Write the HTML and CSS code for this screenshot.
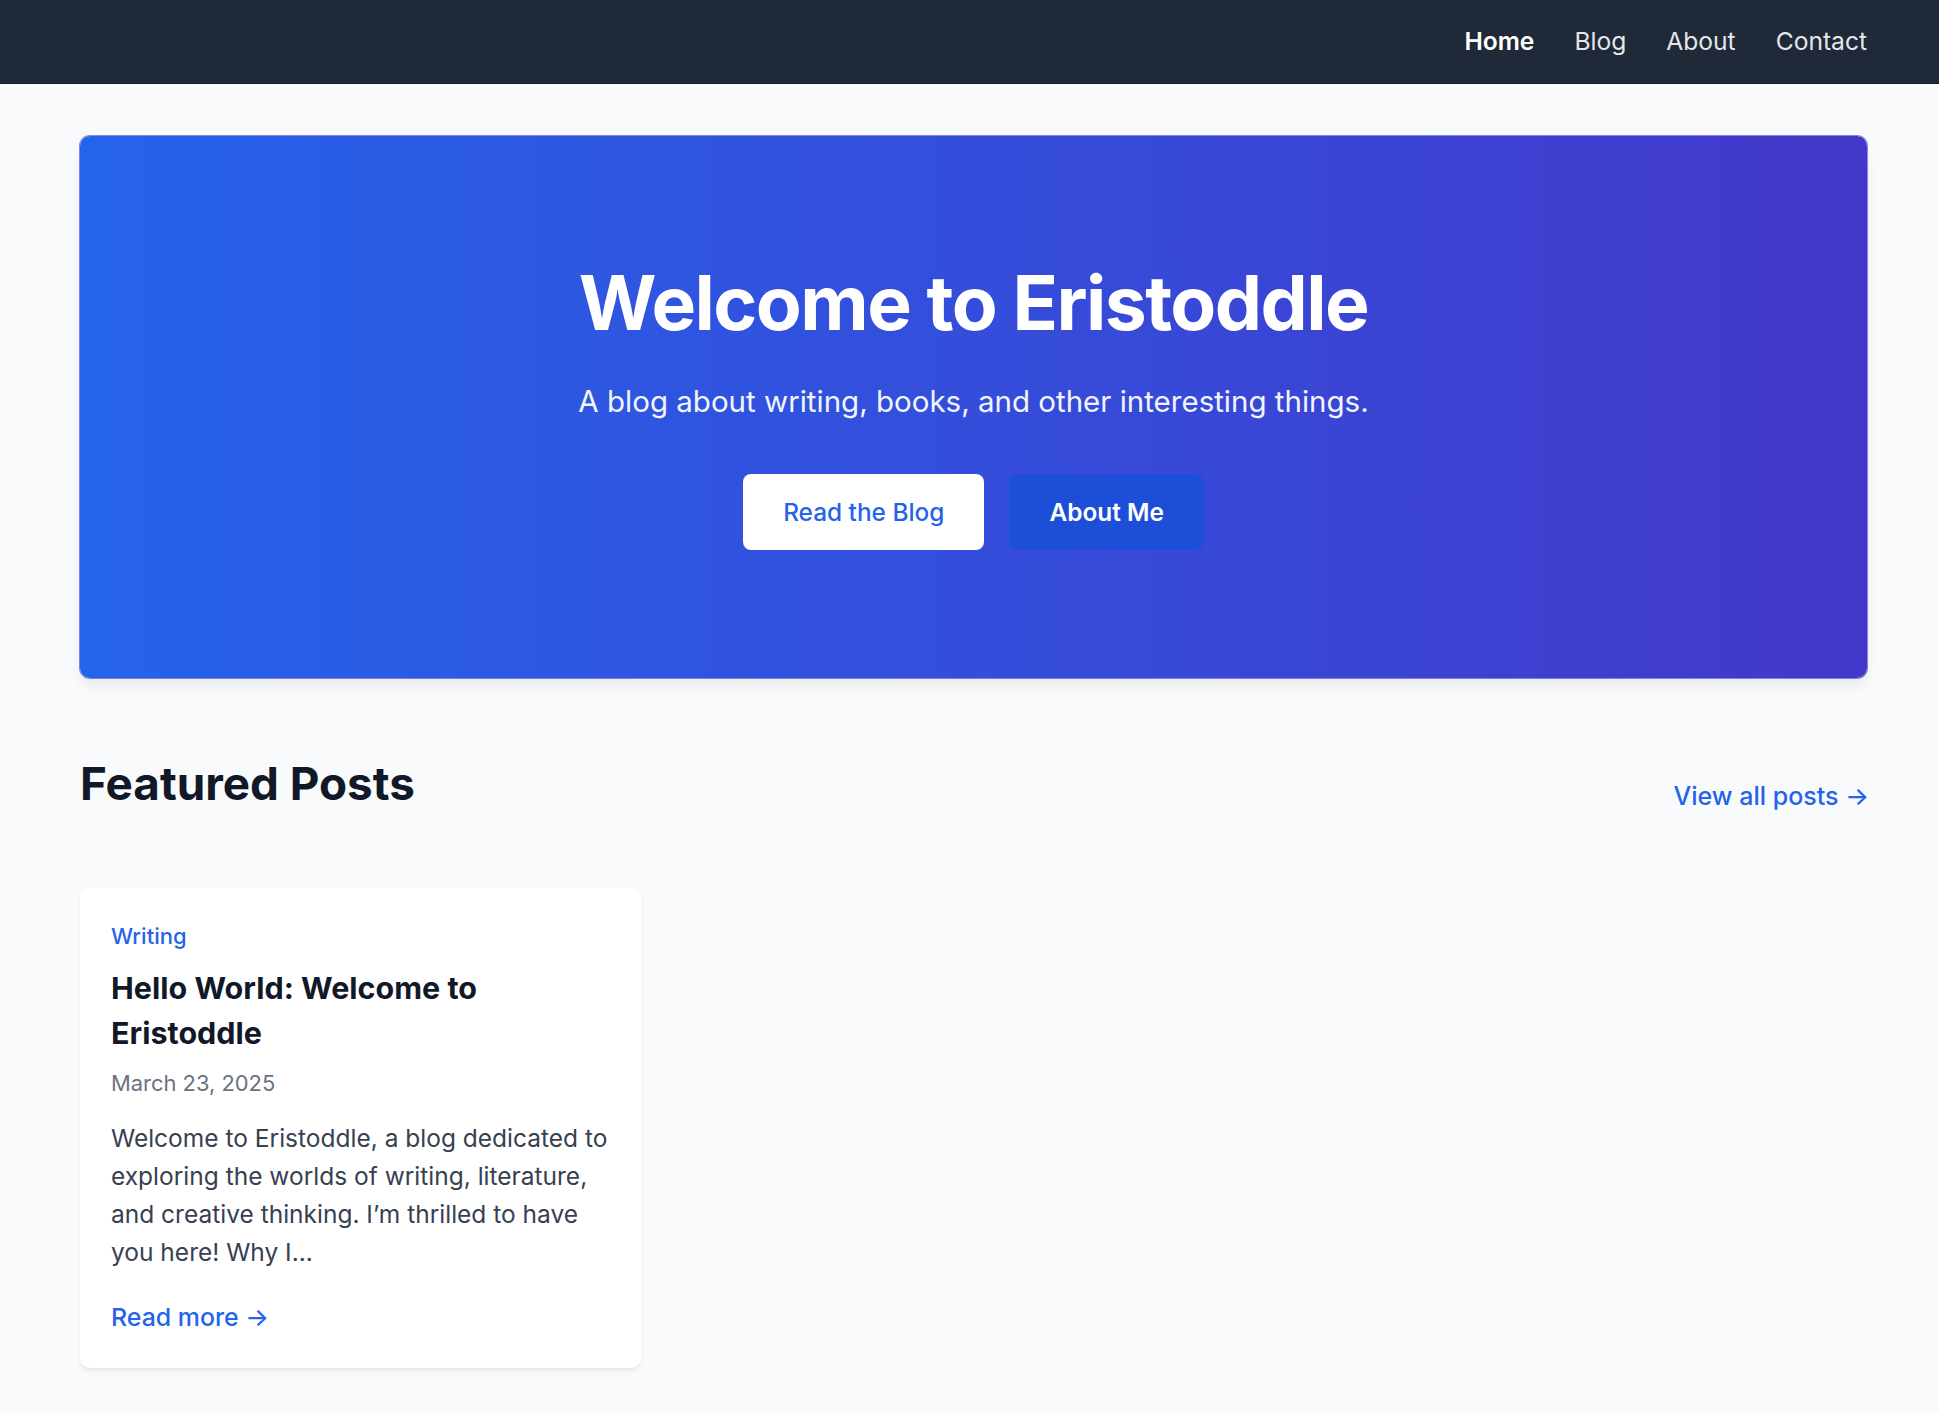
FILE: index.html
```html
<!DOCTYPE html>
<html lang="en">
<head>
<meta charset="utf-8">
<title>Eristoddle</title>
<link rel="stylesheet" href="styles.css">
</head>
<body>
<header class="topbar">
  <div class="topbar-inner">
    <div class="brand"></div>
    <nav class="nav">
      <a class="nav-link active" href="#">Home</a>
      <a class="nav-link" href="#">Blog</a>
      <a class="nav-link" href="#">About</a>
      <a class="nav-link" href="#">Contact</a>
    </nav>
  </div>
</header>
<main class="container">
  <section class="hero">
    <h1 class="hero-title">Welcome to Eristoddle</h1>
    <p class="hero-sub">A blog about writing, books, and other interesting things.</p>
    <div class="hero-actions">
      <a class="btn btn-light" href="#">Read the Blog</a>
      <a class="btn btn-dark" href="#">About Me</a>
    </div>
  </section>
  <section class="featured">
    <div class="featured-head">
      <h2 class="featured-title">Featured Posts</h2>
      <a class="view-all" href="#">View all posts →</a>
    </div>
    <div class="grid">
      <article class="card">
        <a class="card-cat" href="#">Writing</a>
        <h3 class="card-title">Hello World: Welcome to Eristoddle</h3>
        <div class="card-date">March 23, 2025</div>
        <p class="card-text">Welcome to Eristoddle, a blog dedicated to exploring the worlds of writing, literature, and creative thinking. I’m thrilled to have you here! Why I...</p>
        <a class="card-more" href="#">Read more →</a>
      </article>
    </div>
  </section>
</main>
</body>
</html>
```
FILE: styles.css
```css
* { box-sizing: border-box; }
html, body { margin: 0; padding: 0; }
body {
  background: #f9fafb;
  font-family: Inter, "Noto Sans", "Liberation Sans", sans-serif;
  color: #111827;
  min-height: 1412px;
}
a { text-decoration: none; }

.topbar {
  background: #1f2937;
  height: 84px;
  border-bottom: 1px solid #111827;
}
.topbar-inner {
  margin-left: 80px;
  width: 1787px;
  height: 100%;
  display: flex;
  align-items: center;
  justify-content: space-between;
}
.nav { display: flex; gap: 40px; padding-bottom: 2px; }
.nav-link {
  color: #e5e7eb;
  font-size: 24.6px;
  line-height: 34px;
  font-weight: 400;
}
.nav-link.active { color: #ffffff; font-weight: 600; }

.container {
  margin-left: 80px;
  width: 1787px;
  padding-top: 52px;
}

.hero {
  background: linear-gradient(to right, #2563eb, #4338ca);
  border-radius: 10px;
  padding: 129px 40px 128px;
  text-align: center;
  color: #fff;
  box-shadow: 0 0 0 1px rgba(40, 40, 210, 0.55), 0 10px 15px -3px rgba(0,0,0,0.08);
}
.hero-title {
  margin: 0;
  font-size: 75px;
  line-height: 75px;
  font-weight: 700;
  letter-spacing: -1.55px;
}
.hero-sub {
  margin: 41px 0 0;
  font-size: 29.5px;
  line-height: 40px;
  font-weight: 400;
  color: #f1f5ff;
}
.hero-actions {
  margin-top: 53px;
  display: flex;
  justify-content: center;
  gap: 25px;
}
.btn {
  display: inline-block;
  padding: 20px 40px;
  font-size: 24.4px;
  line-height: 36px;
  border-radius: 8px;
}
.btn-light { background: #fff; color: #2563eb; font-weight: 500; }
.btn-dark { background: #1d4ed8; color: #fff; font-weight: 600; }

.featured { padding-top: 79px; }
.featured-head {
  display: flex;
  justify-content: space-between;
  align-items: flex-end;
  margin-bottom: 77px;
}
.featured-title {
  margin: 0;
  font-size: 45.8px;
  line-height: 54px;
  font-weight: 700;
  color: #111827;
}
.view-all {
  color: #2563eb;
  font-size: 25px;
  line-height: 29px;
  font-weight: 500;
  margin-right: -2px;
}

.grid {
  display: grid;
  grid-template-columns: repeat(3, 1fr);
  gap: 52px;
}
.card {
  background: #fff;
  border-radius: 10px;
  padding: 33px 31px 33px;
  box-shadow: 0 4px 6px -1px rgba(0,0,0,0.07), 0 2px 4px -2px rgba(0,0,0,0.05);
  display: flex;
  flex-direction: column;
  align-items: flex-start;
}
.card-cat {
  color: #2563eb;
  font-size: 22px;
  line-height: 30px;
  font-weight: 500;
}
.card-title {
  margin: 14px 0 0;
  font-size: 30.5px;
  line-height: 45px;
  font-weight: 700;
  color: #111827;
}
.card-date {
  margin-top: 13px;
  font-size: 21.9px;
  line-height: 30px;
  color: #6b7280;
}
.card-text {
  margin: 21px 0 0;
  font-size: 24.5px;
  line-height: 38px;
  color: #374151;
}
.card-more {
  margin-top: 28px;
  color: #2563eb;
  font-size: 24.9px;
  line-height: 36px;
  font-weight: 500;
}
```
